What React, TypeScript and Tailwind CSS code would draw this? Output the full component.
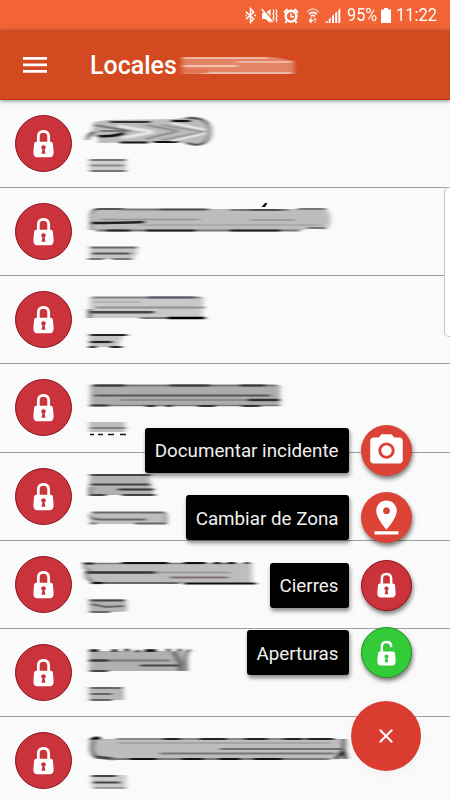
import React from "react";
import { MdPhotoCamera, MdPinDrop } from "react-icons/md";

type streak = {
  d: string;
  w?: number;
  c?: string;
}

type localType = {
  id: number;
  name: string;
  nameFill: string;
  code: string;
  codeFill: string;
  streaks: streak[];
}

// coordinates start at the left edge and the top of each row
const locales: localType[] = [
  {
    id: 1,
    name: "M14 22 L28 20 L95 19 Q108 16 119 18 Q131 21 131 30 Q130 43 118 45 L98 42 L18 43 L18 35 L10 38 Z",
    nameFill: "#bcbcbc",
    code: "M9 59 H46 V71 H9 Z",
    codeFill: "#cfcfcf",
    streaks: [
      { d: "M30 22 H70", w: 2.2, c: "#333" },
      { d: "M92 21 H110", w: 2.2, c: "#111" },
      { d: "M107 18 Q130 17 130 31 Q130 44 116 45 L106 43", w: 2.2, c: "#555" },
      { d: "M40 42.5 H68 M74 42 H98", w: 2.2, c: "#111" },
      { d: "M18 36 Q34 37 44 33", w: 2.6, c: "#111" },
      { d: "M7 40 Q8 34 14 32", w: 2.2, c: "#333" },
      { d: "M38 26 L74 32 L42 38", w: 3, c: "#e6e6e6" },
      { d: "M66 25 L98 31 L66 39", w: 2, c: "#8c8c8c" },
      { d: "M82 25 L124 32 L82 40", w: 2, c: "#999" },
      { d: "M92 23 L126 30 M92 41 L126 33", w: 2, c: "#eaeaea" },
      { d: "M14 25 L50 31 L20 31", w: 2, c: "#777" },
      { d: "M10 60 H46", w: 1.8, c: "#777" },
      { d: "M10 65.5 H44", w: 2, c: "#888" },
      { d: "M10 71 H46", w: 1.8, c: "#777" },
    ],
  },
  {
    id: 2,
    name: "M13 21 H245 Q252 24 250 36 L246 42 L235 40 L222 42 H16 L12 42 Z",
    nameFill: "#bdbdbd",
    code: "M10 59 H57 V66 L52 71 H10 Z",
    codeFill: "#c4c4c4",
    streaks: [
      { d: "M11 42 V27 Q12 21 18 21 H44", w: 1.8, c: "#555" },
      { d: "M40 21.5 H130 M150 22 H208 M218 21 H246", w: 1.9, c: "#777" },
      { d: "M80 21.5 H125 M170 22 H200", w: 1.6, c: "#444" },
      { d: "M12 35 Q36 35 64 34", w: 2.6, c: "#222" },
      { d: "M20 31.5 H120 M170 32 H215", w: 1.6, c: "#98939a" },
      { d: "M16 42.5 H220 M228 40 H245", w: 1.9, c: "#777" },
      { d: "M26 42.5 H50 M66 42.5 H115 M150 42.5 H200", w: 1.9, c: "#222" },
      { d: "M60 37 H240", w: 2, c: "#aaa" },
      { d: "M10 59.5 H57", w: 2, c: "#666" },
      { d: "M12 65.5 H50", w: 2, c: "#555" },
      { d: "M8 71 H24 M32 71 H52", w: 1.9, c: "#777" },
    ],
  },
  {
    id: 3,
    name: "M10 21 H124 L122 42 H9 Z",
    nameFill: "#c9c9c9",
    code: "M9 58 H44 L38 71 H9 Z",
    codeFill: "#c4c4c4",
    streaks: [
      { d: "M12 21.5 H120", w: 1.9, c: "#808080" },
      { d: "M68 21.5 H114", w: 2, c: "#55556d" },
      { d: "M14 26 H60", w: 1.6, c: "#a0aba0" },
      { d: "M16 31.5 H125", w: 2, c: "#909090" },
      { d: "M9 36.3 H74", w: 2.6, c: "#3f4740" },
      { d: "M60 42 H98", w: 2, c: "#777" },
      { d: "M88 42 H125", w: 2.4, c: "#000" },
      { d: "M9.5 33 V42", w: 3, c: "#555" },
      { d: "M10 59 H47", w: 2, c: "#222" },
      { d: "M10 66 H32", w: 2.2, c: "#222" },
      { d: "M9 71 H16 M30 71 H42", w: 2, c: "#222" },
    ],
  },
  {
    id: 4,
    name: "M10 21 H200 V41 H10 Z",
    nameFill: "#acacac",
    code: "M9 58 H45 V68 H9 Z",
    codeFill: "#bcbcbc",
    streaks: [
      { d: "M12 21.5 H196", w: 1.9, c: "#777" },
      { d: "M14 21.5 H45 M90 21.5 H130 M160 21.5 H185", w: 1.9, c: "#333" },
      { d: "M14 31.5 H190", w: 2.2, c: "#5a5454" },
      { d: "M40 36 H170", w: 1.7, c: "#808080" },
      { d: "M168 36 H200", w: 2.4, c: "#2d2d2d" },
      { d: "M10 41.5 H200", w: 1.7, c: "#777" },
      { d: "M10 41.5 H28 M66 42 H75 M86 42 H92 M118 42 H135 M162 42 H180", w: 1.9, c: "#333" },
      { d: "M10 64 H46", w: 1.8, c: "#808080" },
    ],
  },
  {
    id: 5,
    name: "M10 21 H68 L74 42 H9 Z",
    nameFill: "#b2b2b2",
    code: "M12 59 H83 Q87 59 87 65 Q87 71 83 71 H10 V61 Z",
    codeFill: "#bebebe",
    streaks: [
      { d: "M10 22 H70", w: 2, c: "#444" },
      { d: "M10 31.5 H70", w: 2.2, c: "#444" },
      { d: "M38 36.5 H74", w: 2.2, c: "#333" },
      { d: "M10 34 V42 H26 M42 42 H75", w: 2, c: "#444" },
      { d: "M12 59.5 H84 Q87 61 86 70.5 H55 M10 62 Q11 66.5 20 66.5 H66 M10 70.5 H16", w: 1.9, c: "#666" },
    ],
  },
  {
    id: 6,
    name: "M4 22 H172 V42 H12 Q4 38 4 22 Z",
    nameFill: "#bdbdbd",
    code: "M9 58 H44 Q47 60 47 70 L40 71 H9 Z",
    codeFill: "#b4b4b4",
    streaks: [
      { d: "M11 22.5 H125 M132 22.5 H156", w: 1.7, c: "#777" },
      { d: "M3 22.5 H13 M42 22 H88 M104 22 H126 M134 22 H140 M148 22 H155 M165 22 H169", w: 2.2, c: "#111" },
      { d: "M5 22 V28 M10 28 Q4 32 7 37 L14 42", w: 2, c: "#666" },
      { d: "M6 31.5 H75", w: 2.4, c: "#333" },
      { d: "M75 31.5 H150", w: 1.8, c: "#999" },
      { d: "M90 36.5 H148", w: 2, c: "#806f6f" },
      { d: "M11 42 H100", w: 2, c: "#666" },
      { d: "M12 42 H22", w: 2.2, c: "#111" },
      { d: "M104 42.5 H176", w: 2.2, c: "#111" },
      { d: "M10 59.5 H45", w: 2, c: "#444" },
      { d: "M11 63 L26 66 L44 65 M10 71 H30", w: 2, c: "#666" },
    ],
  },
  {
    id: 7,
    name: "M9 22 H104 V42 H9 Z",
    nameFill: "#b0b0b0",
    code: "M9 58 H43 V71 H9 Z",
    codeFill: "#b8b8b8",
    streaks: [
      { d: "M10 21.5 H18 M32 21.5 H37 M45 21 H49 M56 22 H59 M65 21.5 H76 M87 21 H90 M98 21 H101", w: 2.6, c: "#000" },
      { d: "M9 31.5 H28", w: 2.4, c: "#333" },
      { d: "M28 31.5 H90", w: 2, c: "#777" },
      { d: "M10 42 H28 M60 36.5 H98", w: 2.2, c: "#444" },
      { d: "M94 23 L100 34 V42 M110 21 Q104 22 106 42", w: 2.6, c: "#333" },
      { d: "M10 59 H42 M10 65 H32 M10 71 H32", w: 2, c: "#666" },
      { d: "M42 60 V71", w: 1.6, c: "#888" },
    ],
  },
  {
    id: 8,
    name: "M10 22 H263 L265 42 H16 Q10 36 10 22 Z",
    nameFill: "#bdbdbd",
    code: "M11 58 H46 V71 H12 Z",
    codeFill: "#cacaca",
    streaks: [
      { d: "M11 23 Q16 19 20 22", w: 2.8, c: "#000" },
      { d: "M36 22 H254", w: 1.8, c: "#888" },
      { d: "M84 22 H100 M120 22 H146 M165 22 H187 M204 22 H222 M227 22 H254", w: 2, c: "#222" },
      { d: "M13 24 Q9 35 16 40 L34 42", w: 2.8, c: "#444" },
      { d: "M38 26 H250", w: 1.8, c: "#a5a5a5" },
      { d: "M140 32 H262", w: 2.2, c: "#707070" },
      { d: "M80 36.5 H180 M180 36.5 H255", w: 2, c: "#777" },
      { d: "M30 42 H250", w: 1.8, c: "#777" },
      { d: "M50 42 H76 M102 42 H123 M139 42 H160 M174 42 H202", w: 2, c: "#111" },
      { d: "M256 42 L262 35 L266 42 M264 22 V34 L266 42", w: 2.4, c: "#111" },
      { d: "M12 59 H36 M13 65.5 H40", w: 2.2, c: "#444" },
      { d: "M14 71 H46", w: 1.8, c: "#999" },
    ],
  },
];

type lockProps = {
  open?: boolean;
  color: string;
  className: string;
}

function Lock({ open, color, className }: lockProps) {
  return (
    <svg viewBox="0 0 22 30" className={className}>
      <path d={open ? "M5.6 15 V7.8 Q5.6 2.2 11 2.2 Q16.2 2.2 16.4 7" : "M5.6 15 V7.8 Q5.6 2.2 11 2.2 Q16.4 2.2 16.4 7.8 V15"} fill="none" stroke="#fff" strokeWidth="2.9" strokeLinecap={open ? "round" : "butt"} />
      <path d="M3.5 13.2 H18.5 Q20.8 13.2 20.9 15.6 L21.6 24 Q21.8 29.5 17.5 29.5 H4.5 Q.2 29.5 .4 24 L1.1 15.6 Q1.2 13.2 3.5 13.2 Z" fill="#fff" />
      <path d="M11 16.8 A2.3 2.3 0 0 1 12.1 21.2 L13.1 25.8 H8.9 L9.9 21.2 A2.3 2.3 0 0 1 11 16.8 Z" fill={color} />
    </svg>
  );
}

function StatusBar() {
  return (
    <div className="h-[30px] shrink-0 bg-[#f26336] text-[17.5px] text-white">
      <div className="flex h-full items-center pt-px pl-[245px]">
        <svg viewBox="0 0 12 18" className="h-[17px] w-[11px]" fill="none" stroke="#fff" strokeWidth="1.6">
          <path d="M1 5 L9.5 12.5 L6 16.5 V1.5 L9.5 5.5 L1 13" />
          <path d="M.5 9 H2 M10 9 H12" />
        </svg>
        <svg viewBox="0 0 17 16" className="ml-[5px] h-4 w-[17px]" fill="none">
          <path d="M1 5 H4.5 L9.5 1 V15 L4.5 11 H1 Z" fill="#fff" />
          <path d="M1.6 0 L12.6 13" stroke="#f26336" strokeWidth="1.2" />
          <path d="M.6 1 L11.6 14" stroke="#fff" strokeWidth="1.6" />
          <path d="M12 1.5 L13 3.5 L12 5.5 L13 8 L12 10.5 L13 12.5 M15 1.5 L16 3.5 L15 5.5 L16 8 L15 10.5 L16 12.5 L15 14" stroke="#fff" strokeWidth="1.2" />
        </svg>
        <svg viewBox="0 0 16 16" className="ml-[5px] h-4 w-4">
          <circle cx="8" cy="8.2" r="5.4" fill="none" stroke="#fff" strokeWidth="2.4" />
          <path d="M1 4.6 L4.4 1 M15 4.6 L11.6 1 M3.8 12.8 L2.4 15 M12.2 12.8 L13.6 15" stroke="#fff" strokeWidth="2" />
          <path d="M8 5 V8.7 H11" fill="none" stroke="#fff" strokeWidth="1.4" />
        </svg>
        <svg viewBox="0 0 14 17" className="ml-[7px] h-[17px] w-[14px]" fill="none" stroke="#fff">
          <path d="M1 5 Q7 -1 13 5" strokeWidth="1.2" opacity=".6" />
          <path d="M3 7.2 Q7 3.4 11 7.2" strokeWidth="1.6" />
          <path d="M5 9.4 Q7 7.5 9 9.4" strokeWidth="1.6" />
          <path d="M4.8 10.5 V15 M3 13 L4.8 15.2 L6.6 13" strokeWidth="1.3" />
          <path d="M9 16 V11.5 M7.4 13.2 L9 11.2 L10.6 13.2" strokeWidth="1.2" opacity=".6" />
        </svg>
        <svg viewBox="0 0 16 15" className="ml-[5px] h-[15px] w-4" fill="#fff">
          <path d="M0 15 L2.5 12.5 V15 Z M3.7 11.5 L5.7 9.5 V15 H3.7 Z M7 8.3 L9 6.3 V15 H7 Z M10.2 5.2 L12.2 3.2 V15 H10.2 Z M13.3 2.2 L15.3 .2 V15 H13.3 Z" />
        </svg>
        <span className="ml-[5.5px] w-[34px] origin-left scale-x-[0.93]">95%</span>
        <svg viewBox="0 0 10 15" className="h-[15px] w-[10px]" fill="#fff">
          <path d="M3 0 H7 V1.5 H10 V15 H0 V1.5 H3 Z" />
        </svg>
        <span className="ml-[5.5px] origin-left scale-x-[0.94]">11:22</span>
      </div>
    </div>
  );
}

function Header() {
  return (
    <div className="relative z-10 flex h-[70px] shrink-0 items-center border-b border-[#c8320c] bg-[#d34a20] pl-[23px] shadow-[0_1px_4px_rgba(0,40,50,0.5)]">
      <svg viewBox="0 0 24 16" className="h-4 w-6" fill="#fff">
        <path d="M0 0 H24 V2.7 H0 Z M0 6.5 H24 V9.2 H0 Z M0 13 H24 V15.7 H0 Z" />
      </svg>
      <h1 className="ml-[43px] mt-[3px] w-[88px] text-[25px] font-medium text-white">Locales</h1>
      <svg viewBox="0 0 122 26" className="mt-0.5 h-[26px] w-[122px]">
        <g filter="url(#smear)">
          <path d="M4 4 H95 L116 8 V21 H4 Z" fill="#e38465" />
          <path d="M5 5 H90 M60 9 H114" stroke="#f0b8a4" strokeWidth="2" />
          <path d="M5 13 H60" stroke="#f3c4b3" strokeWidth="2" />
          <path d="M24 20 H114" stroke="#edbaa9" strokeWidth="2.2" />
          <path d="M4 18 H30" stroke="#e27551" strokeWidth="4" />
        </g>
      </svg>
    </div>
  );
}

function LocalRow({ item }: { item: localType }) {
  return (
    <li className="flex h-[88.15px] shrink-0 border-b border-[#a0a0a0] pl-[15px]">
      <div className="mt-[15px] flex size-[57px] shrink-0 items-center justify-center rounded-full border border-[#8e1118] bg-[#cb333c]">
        <Lock color="#cb333c" className="h-[29px] w-[21px]" />
      </div>
      <svg viewBox="0 0 280 87" className="ml-2 h-[87px] w-[280px] shrink-0">
        <g filter="url(#smear)">
          <path d={item.name} fill={item.nameFill} />
          <path d={item.code} fill={item.codeFill} />
          {item.streaks.map((s, index) =>
            <path key={index} d={s.d} fill="none" stroke={s.c} strokeWidth={s.w} />
          )}
        </g>
        {item.id === 2 && <path d="M181.5 19 L185 15 L187.5 15 L185 19 Z" fill="#111" />}
        {item.id === 4 && <path d="M10 70.5 H14 M18 70.5 H23 M28 70.5 H34 M40 70.5 H46" stroke="#111" strokeWidth="1.7" />}
      </svg>
    </li>
  );
}

type actionProps = {
  label: string;
  color: string;
  children: React.ReactNode;
}

function Action({ label, color, children }: actionProps) {
  return (
    <div className="flex items-center justify-end gap-3">
      <span className="flex h-[45px] items-center rounded-[3px] bg-black px-[10px] pt-[3px] text-[18.8px] whitespace-nowrap text-[#f0f0f0] shadow-[1px_3px_4px_rgba(0,0,0,0.45)]">
        {label}
      </span>
      <button className={"flex size-[51px] items-center justify-center rounded-full shadow-[1px_3px_4px_rgba(0,0,0,0.5)] " + color}>
        {children}
      </button>
    </div>
  );
}

function App() {
  return (
    <div className="relative flex h-[800px] w-[450px] flex-col overflow-hidden bg-[#fafafa] font-['Roboto',sans-serif]">
      <svg className="absolute size-0">
        <filter id="smear" x="-5%" y="-5%" width="110%" height="110%" colorInterpolationFilters="sRGB">
          <feGaussianBlur stdDeviation="2.6 0.6" />
        </filter>
      </svg>

      <StatusBar />
      <Header />

      <ul className="flex flex-col">
        {locales.map((item) =>
          <LocalRow key={item.id} item={item} />
        )}
      </ul>

      {/* edge panel handle */}
      <div className="absolute top-[187px] left-[444px] h-[150px] w-3 rounded-[5px] border border-[#c4c4c4] bg-[#fdfdfd]" />

      <div className="absolute top-[424.5px] right-[38.5px] flex flex-col gap-[16.5px]">
        <Action label="Documentar incidente" color="bg-[#db4336]">
          <MdPhotoCamera className="size-[39px] text-white" />
        </Action>
        <Action label="Cambiar de Zona" color="bg-[#db4336]">
          <MdPinDrop className="size-[41px] text-white" />
        </Action>
        <Action label="Cierres" color="border border-[#8e1118] bg-[#cb333c]">
          <Lock color="#cb333c" className="h-[26px] w-[19px]" />
        </Action>
        <Action label="Aperturas" color="border border-[#1f8f20] bg-[#33cc38]">
          <Lock open color="#33cc38" className="h-[26px] w-[19px]" />
        </Action>
      </div>

      <button className="absolute top-[701px] left-[351px] flex size-[70px] items-center justify-center rounded-full bg-[#db3c30] shadow-[0_3px_14px_rgba(0,0,0,0.04)]">
        <svg viewBox="0 0 14 14" className="size-[14px]" fill="none" stroke="#fff" strokeWidth="2">
          <path d="M.8 .8 L13.2 13.2 M13.2 .8 L.8 13.2" />
        </svg>
      </button>
    </div>
  );
}

export default App;
